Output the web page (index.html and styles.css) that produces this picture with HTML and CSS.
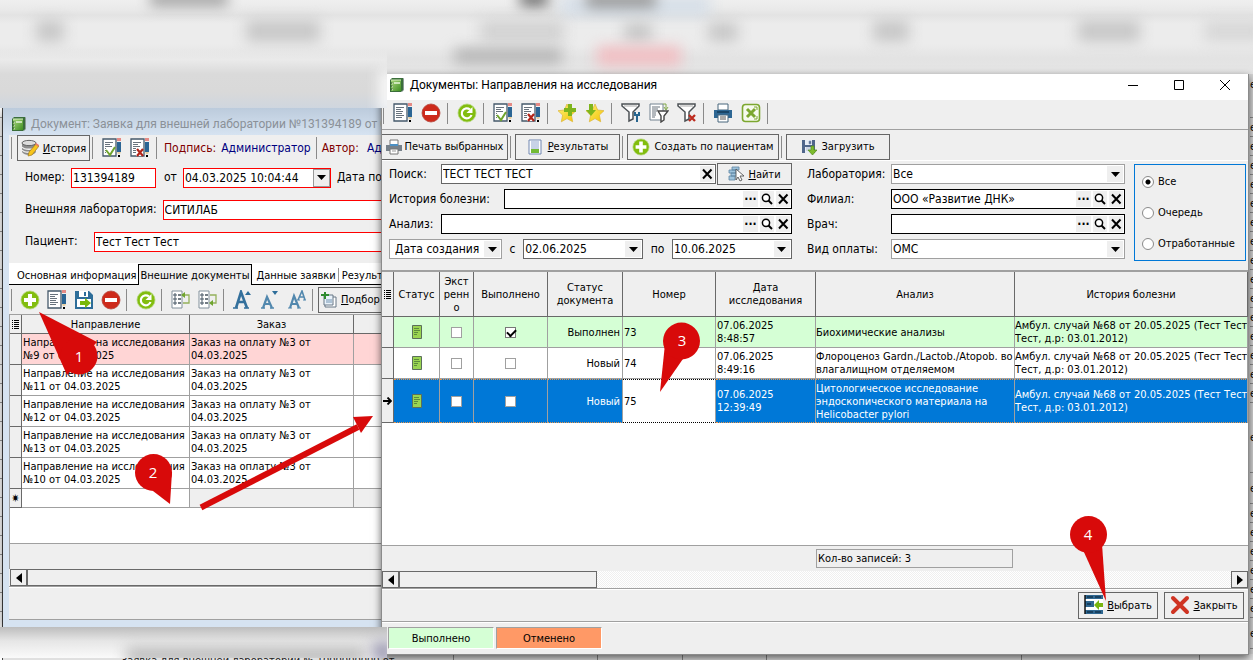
FILE: index.html
```html
<!DOCTYPE html>
<html lang="ru">
<head>
<meta charset="utf-8">
<title>Документы: Направления на исследования</title>
<link rel="stylesheet" href="styles.css">
</head>
<body>
<svg class="defs" aria-hidden="true">
  <defs>
    <linearGradient id="g-book" x1="0" y1="0" x2="1" y2="1"><stop offset="0" stop-color="#a9d67c"/><stop offset="1" stop-color="#3f8f22"/></linearGradient>
    <linearGradient id="g-star" x1="0" y1="0" x2="1" y2="1"><stop offset="0" stop-color="#fff27a"/><stop offset="1" stop-color="#f2c200"/></linearGradient>
    <symbol id="i-book" viewBox="0 0 16 16"><path d="M3 1h11q1 0 1 1v11l-2 2z" fill="#8b9a95"/><path d="M1 3l2-2h11v12l-2 2H1z" fill="#3a6e3a"/><rect x="2" y="3" width="10" height="11" fill="url(#g-book)"/><path d="M2 3h10" stroke="#d8f0c0"/><path d="M5 6h6M3 6.500h1M3 9.500h1M3 12.500h1" stroke="#e8f6da" stroke-width="1.500"/><path d="M1.500 6h2M1.500 9h2M1.500 12h2" stroke="#245024"/></symbol>
    <symbol id="i-doc" viewBox="0 0 20 20"><path d="M1 1h13v17H1z" fill="#fff" stroke="#45596b" stroke-width="1.300"/><path d="M3 4.500h8M3 6.500h5M3 8.500h7M3 10.500h6M3 12.500h8M3 14.500h6" stroke="#68727c"/><path d="M15 0h4v3h-4z" fill="#e58a85"/><path d="M15 4h4v10h-4z" fill="#2b6594"/><path d="M15 14h4l-1 2h-2z" fill="#e8cfa0"/><path d="M16 17h2v2h-2z" fill="#000"/></symbol>
    <symbol id="i-doccheck" viewBox="0 0 20 20"><use href="#i-doc"/><path d="M4 10h9v7H4z" fill="#fff"/><path d="M4 12l4 5 5-8" fill="none" stroke="#6fa32c" stroke-width="2"/></symbol>
    <symbol id="i-docx" viewBox="0 0 20 20"><use href="#i-doc"/><path d="M6 10h7v8H6z" fill="#fff"/><path d="M7 11l6 7M13 11l-6 7" stroke="#b22419" stroke-width="2.200"/></symbol>
    <symbol id="i-minus" viewBox="0 0 20 20"><circle cx="10" cy="10" r="9" fill="#cd2a1b" stroke="#b5483e" stroke-width=".8"/><path d="M4 8h12v4H4z" fill="#fff"/></symbol>
    <symbol id="i-plus" viewBox="0 0 20 20"><circle cx="10" cy="10" r="9" fill="#82bd0f" stroke="#b2d77a" stroke-width=".8"/><path d="M8 4h4v4h4v4h-4v4H8v-4H4V8h4z" fill="#fff"/></symbol>
    <symbol id="i-refresh" viewBox="0 0 20 20"><circle cx="10" cy="10" r="9" fill="#82bd0f" stroke="#b2d77a" stroke-width=".8"/><path d="M13 6.500A5 5 0 1 0 14.500 12" fill="none" stroke="#fff" stroke-width="2.200"/><path d="M15.500 4v6H9.500z" fill="#fff"/></symbol>
    <symbol id="i-save" viewBox="0 0 20 20"><path d="M1 1h14l4 4v14H1z" fill="#2d6d99"/><path d="M5 1h9v6H5z" fill="#fff"/><path d="M10 2h2v4h-2z" fill="#2d6d99"/><path d="M3 9h14v8H3z" fill="#fff"/><path d="M6 11h5V8l6 5-6 5v-3H6z" fill="#78b80a"/></symbol>
    <symbol id="i-tree" viewBox="0 0 20 20"><path d="M1 1h10v17H1z" fill="#fff" stroke="#81909b"/><path d="M3 4h2v2H3zM3 8h2v2H3zM3 12h2v2H3z" fill="none" stroke="#445563"/><path d="M7 5h3M7 9h3M7 13h3" stroke="#44515c" stroke-width="1.400"/></symbol>
    <symbol id="i-treeup" viewBox="0 0 20 20"><use href="#i-tree"/><path d="M12 13h6V5h-5" fill="none" stroke="#94b15b" stroke-width="1.300"/><path d="M14 2v6l-4-3z" fill="#6fa52f"/></symbol>
    <symbol id="i-treedown" viewBox="0 0 20 20"><use href="#i-tree"/><path d="M12 5h6v8h-4" fill="none" stroke="#94b15b" stroke-width="1.300"/><path d="M15 10v6l-4-3z" fill="#6fa52f"/></symbol>
    <symbol id="i-fontup" viewBox="0 0 20 20"><path d="M3 18L8 2l6 16M5 12h7" fill="none" stroke="#34709c" stroke-width="2.600"/><path d="M0 18h5M11 18h5" stroke="#34709c" stroke-width="1.500"/><path d="M12 5l3-4 3 4z" fill="#2d6d99"/></symbol>
    <symbol id="i-fontdown" viewBox="0 0 20 20"><path d="M3 18L7 7l5 11M4 14h7" fill="none" stroke="#5288ae" stroke-width="2.200"/><path d="M1 18h4M10 18h4" stroke="#5288ae" stroke-width="1.500"/><path d="M12 1h6l-3 4z" fill="#2d6d99"/></symbol>
    <symbol id="i-fontreset" viewBox="0 0 20 20"><path d="M3 18L7 6l5 12M4 14h7" fill="none" stroke="#5288ae" stroke-width="2.200"/><path d="M1 18h4M10 18h4M10 10h3M16 10h3" stroke="#5288ae"/><path d="M11 10l4-9 3 9M12 7h5" fill="none" stroke="#5288ae" stroke-width="1.600"/></symbol>
    <symbol id="i-pick" viewBox="0 0 16 16"><path d="M4 5h11v10H4z" fill="#fff" stroke="#667785"/><path d="M3 3h9v10H3z" fill="#e9f2fa" stroke="#667785"/><path d="M5 8h6M5 10h6" stroke="#7192b0"/><path d="M3 0h2v2h3v2H5v3H3V4H0V2h3z" fill="#2f8b2f"/></symbol>
    <symbol id="i-base" viewBox="0 0 18 18"><path d="M1 4v9c2 4 12 4 14 0V4z" fill="#8c8c8c"/><ellipse cx="8" cy="4" rx="7" ry="2.600" fill="#dcdcdc" stroke="#666"/><path d="M1 8c2 3 12 3 14 0M1 11c2 3 12 3 14 0" fill="none" stroke="#f1f1f1" stroke-width="1.300"/><path d="M7 17l1-4 7-8 3 2-7 9z" fill="#f7c51c" stroke="#9f781c" stroke-width=".7"/><path d="M14 5l1-1 3 2-1 2z" fill="#e77a67"/></symbol>
    <symbol id="i-star" viewBox="0 0 20 20"><path d="M10 1l2.700 6 6.300.7-4.600 4.400 1.300 6.700L10 15.600l-5.700 3.200 1.300-6.700L1 7.700 7.300 7z" fill="url(#g-star)" stroke="#dcb536" stroke-width=".7"/></symbol>
    <symbol id="i-starplus" viewBox="0 0 20 20"><use href="#i-star"/><path d="M11 1h4v4h4v4h-4v4h-4V9H7V5h4z" fill="#7eb51c"/></symbol>
    <symbol id="i-stardown" viewBox="0 0 20 20"><use href="#i-star"/><path d="M4 1h4v6h3l-5 6-5-6h3z" fill="#7eb51c"/></symbol>
    <symbol id="i-funnel" viewBox="0 0 20 20"><path d="M1 1h17v2l-6 6v7l-4 2V9L1 3z" fill="#fff" stroke="#4c5155" stroke-width="1.500"/><path d="M3 3h13" stroke="#aaa"/></symbol>
    <symbol id="i-funneltool" viewBox="0 0 20 20"><use href="#i-funnel"/><path d="M14 9v3h4V9M16 12v7" fill="none" stroke="#28668f" stroke-width="2"/></symbol>
    <symbol id="i-funneldoc" viewBox="0 0 20 20"><path d="M1 1h13v16H1z" fill="#fff" stroke="#738290"/><path d="M3 4h8M3 6h6M3 8h5M3 10h4M3 12h4M3 14h3" stroke="#68727c"/><path d="M14 1h3v5M15 4l2 3 2-3" fill="none" stroke="#81a84b"/><path d="M9 8h10l-4 5v4l-3 2v-6z" fill="#fff" stroke="#444" stroke-width="1.400"/></symbol>
    <symbol id="i-funnelx" viewBox="0 0 20 20"><use href="#i-funnel"/><path d="M12 12l6 6M18 12l-6 6" stroke="#bd2b1f" stroke-width="2.300"/></symbol>
    <symbol id="i-print" viewBox="0 0 20 20"><path d="M5 1h10v6H5z" fill="#fff" stroke="#49677d"/><path d="M1 7h18v8H1z" fill="#2d6693"/><path d="M4 9h12" stroke="#153b59" stroke-width="1.500"/><path d="M5 12h10v7H5z" fill="#fff" stroke="#49677d"/><path d="M7 14h6M7 16h6" stroke="#555"/></symbol>
    <symbol id="i-printgray" viewBox="0 0 16 16"><path d="M4 1h8v5H4z" fill="#fff" stroke="#777"/><path d="M0 6h16v6H0z" fill="#77818a"/><path d="M4 5h8v2H4z" fill="#4c90c4"/><path d="M4 10h8v5H4z" fill="#fff" stroke="#777"/><path d="M6 12h4" stroke="#999"/></symbol>
    <symbol id="i-excel" viewBox="0 0 20 20"><rect x="1.500" y="1.500" width="17" height="17" rx="3" fill="#f6faed" stroke="#7ca72f" stroke-width="1.600"/><path d="M6 6l8 8M14 6l-8 8" stroke="#7ca72f" stroke-width="3"/><path d="M13 4h3v3M13 16h3v-3" fill="none" stroke="#7ca72f"/></symbol>
    <symbol id="i-results" viewBox="0 0 16 16"><path d="M2 1h12v14H2z" fill="#fff" stroke="#7187b1"/><path d="M4 3h8M4 5h8M4 7h8M4 9h8" stroke="#91a6ce"/><path d="M4 10h8v4H4z" fill="#72ba35"/></symbol>
    <symbol id="i-find" viewBox="0 0 16 16"><path d="M4 1h7v3H4zM1 4h7v3H1zM3 7h7v3H3zM1 10h6v4H1z" fill="#9fc4dd" stroke="#5e87a3" stroke-width=".8"/><path d="M8 3v11l2-3 2 4 2-1-2-4h4z" fill="#fff" stroke="#555" stroke-width=".9"/></symbol>
    <symbol id="i-load" viewBox="0 0 16 16"><path d="M1 1h13v13H1z" fill="#50668b"/><path d="M4 1h7v5H4zM4 8h7v6H4z" fill="#e8edf6"/><path d="M8 2h2v3H8zM5 9h5M5 11h4" fill="#50668b" stroke="#8b9ab8" stroke-width=".6"/><path d="M10 7h3v4h3l-4.500 5L7 11h3z" fill="#7ebc2e" stroke="#4f8a1a" stroke-width=".7"/></symbol>
    <symbol id="i-choose" viewBox="0 0 20 20"><path d="M0 0h19v19H0z" fill="#fff"/><path d="M1 0h18v4H1zM1 6h9v6H1zM1 15h18v4H1z" fill="#2f6791"/><path d="M3 2h6M11 2h6M3 9h4M3 17h6M11 17h6" stroke="#12344d" stroke-width="1.300"/><path d="M1 0v19" stroke="#111" stroke-width="1.500"/><path d="M19 8v4h-4v3l-5-5 5-5v3z" fill="#78b510"/></symbol>
    <symbol id="i-cross" viewBox="0 0 20 20"><path d="M3 3l14 14M17 3L3 17" stroke="#cf3423" stroke-width="4" stroke-linecap="round"/></symbol>
    <symbol id="i-lens" viewBox="0 0 12 12"><circle cx="5" cy="4.800" r="3.600" fill="#fff" stroke="#000" stroke-width="1.500"/><path d="M7.500 7.500L11 11" stroke="#000" stroke-width="2"/></symbol>
    <symbol id="i-x" viewBox="0 0 12 12"><path d="M2 1.500l8.500 9M10.500 1.500L2 10.500" stroke="#000" stroke-width="2"/></symbol>
    <symbol id="i-down" viewBox="0 0 9 5"><path d="M0 0h9L4.500 5z"/></symbol>
    <symbol id="i-left" viewBox="0 0 6 10"><path d="M6 0v10L0 5z"/></symbol>
    <symbol id="i-right" viewBox="0 0 6 10"><path d="M0 0v10l6-5z"/></symbol>
    <symbol id="i-list" viewBox="0 0 7 11"><path d="M2 1.500h5M2 3.500h5M2 5.500h5M2 7.500h5M2 9.500h5M0 1.500h1M0 3.500h1M0 5.500h1M0 7.500h1M0 9.500h1" stroke="#000"/></symbol>
    <symbol id="i-green" viewBox="0 0 10 14"><path d="M.5.500h9v13h-9z" fill="#9ad551" stroke="#5b6f5b"/><path d="M2 3.500h5M2 5.500h6M2 7.500h4M2 9.500h3" stroke="#5c8c3c"/></symbol>
  </defs>
</svg>

<div class="desktop">
  <div class="backdrop">
    <div class="edge edge-left"></div>
    <ul class="edge edge-right">
      <li class="tall">е</li><li>е</li><li>е</li><li>е</li><li>е</li><li>е</li><li>е</li><li>е</li><li>е</li><li>е</li><li>е</li><li>е</li><li>е</li><li>е</li><li>е</li><li>е</li><li class="taller">е</li><li class="mid">е</li><li>е</li><li>е</li><li>е</li><li>е</li><li>е</li><li>е</li><li class="mid">е</li>
    </ul>
    <div class="edge edge-bottom"><p>Заявка для внешней лаборатории № 1000000000 от</p><span class="tick t1"></span><span class="tick t2"></span><span class="tick t3"></span><span class="tick t4"></span><span class="tick t5"></span><span class="tick t6"></span></div>
  </div>

  <section class="window request">
    <header class="titlebar"><svg class="i16"><use href="#i-book"/></svg><h2>Документ: Заявка для внешней лаборатории №131394189 от 04.03.2025</h2></header>
    <div class="client">
      <div class="toolbar bar-history">
        <span class="sep"></span>
        <button class="btn btn-history"><svg class="i18"><use href="#i-base"/></svg><span><u>И</u>стория</span></button>
        <span class="sep"></span>
        <button class="tool" aria-label="Подписать"><svg><use href="#i-doccheck"/></svg></button>
        <button class="tool" aria-label="Снять подпись"><svg><use href="#i-docx"/></svg></button>
        <span class="sep"></span>
        <p class="meta"><span>Подпись:</span> <b>Администратор</b></p>
        <span class="sep"></span>
        <p class="meta author"><span>Автор:</span> <b>Администратор</b></p>
      </div>
      <div class="request-form">
        <div class="row">
          <label for="num">Номер:</label><input class="field red num" id="num" value="131394189">
          <label for="dt">от</label><span class="field red date"><input id="dt" value="04.03.2025 10:04:44"><button class="drop boxed" aria-label="Открыть календарь"><svg class="tri"><use href="#i-down"/></svg></button></span>
          <span class="trail">Дата подписи:</span>
        </div>
        <div class="row"><label for="lab">Внешняя лаборатория:</label><input class="field red grow" id="lab" value="СИТИЛАБ"></div>
        <div class="row patient"><label for="pat">Пациент:</label><input class="field red grow" id="pat" value="Тест Тест Тест"></div>
      </div>
      <nav class="tabs">
        <button>Основная информация</button><button class="active">Внешние документы</button><button>Данные заявки</button><button class="ruled">Результаты</button>
      </nav>
      <div class="toolbar bar-docs">
        <span class="sep"></span>
        <button class="tool" aria-label="Добавить"><svg><use href="#i-plus"/></svg>
          <span class="pin pin1"><svg viewBox="0 0 60 64"><path d="M0 0L28 63 58 30z"/><circle cx="40" cy="44" r="18.500"/></svg><i>1</i></span></button>
        <button class="tool" aria-label="Изменить"><svg><use href="#i-doc"/></svg></button>
        <button class="tool" aria-label="Сохранить"><svg><use href="#i-save"/></svg></button>
        <button class="tool" aria-label="Удалить"><svg><use href="#i-minus"/></svg></button>
        <span class="sep"></span>
        <button class="tool" aria-label="Обновить"><svg><use href="#i-refresh"/></svg></button>
        <span class="sep"></span>
        <button class="tool" aria-label="Свернуть"><svg><use href="#i-treeup"/></svg></button>
        <button class="tool" aria-label="Развернуть"><svg><use href="#i-treedown"/></svg></button>
        <span class="sep"></span>
        <button class="tool" aria-label="Увеличить шрифт"><svg><use href="#i-fontup"/></svg></button>
        <button class="tool" aria-label="Уменьшить шрифт"><svg><use href="#i-fontdown"/></svg></button>
        <button class="tool" aria-label="Сбросить шрифт"><svg><use href="#i-fontreset"/></svg></button>
        <span class="sep"></span>
        <button class="btn btn-pick"><svg class="i16"><use href="#i-pick"/></svg><span><u>П</u>одбор</span></button>
      </div>
      <div class="grid-area">
        <table class="grid docs">
          <colgroup><col class="w12"><col class="w168"><col class="w164"><col></colgroup>
          <thead><tr><th><svg class="list"><use href="#i-list"/></svg></th><th>Направление</th><th>Заказ</th><th></th></tr></thead>
          <tbody>
            <tr class="pink"><td class="mark"></td><td>Направление на исследования №9 от 04.03.2025</td><td>Заказ на оплату №3 от 04.03.2025</td><td></td></tr>
            <tr><td class="mark"></td><td>Направление на исследования №11 от 04.03.2025</td><td>Заказ на оплату №3 от 04.03.2025</td><td></td></tr>
            <tr><td class="mark"></td><td>Направление на исследования №12 от 04.03.2025</td><td>Заказ на оплату №3 от 04.03.2025</td><td></td></tr>
            <tr><td class="mark"></td><td>Направление на исследования №13 от 04.03.2025</td><td>Заказ на оплату №3 от 04.03.2025</td><td></td></tr>
            <tr><td class="mark"></td><td>Направление на исследования №10 от 04.03.2025</td><td>Заказ на оплату №3 от 04.03.2025</td><td></td></tr>
            <tr class="blank"><td class="mark">✷</td><td><span class="pin pin2"><svg viewBox="0 0 38 52"><circle cx="18.500" cy="18.500" r="18.500"/><path d="M37 18l-2 32L18 37z"/></svg><i>2</i></span></td><td class="off"></td><td class="off"></td></tr>
          </tbody>
        </table>
      </div>
      <div class="grid-foot"></div>
      <div class="scroll"><button aria-label="Влево"><svg class="arr"><use href="#i-left"/></svg></button><span class="thumb full"></span></div>
      <div class="status"></div>
    </div>
  </section>

  <div class="blur-band" aria-hidden="true">
    <span class="smear s1"></span><span class="smear s2"></span><span class="smear s3"></span><span class="smear s5"></span><span class="smear s4"></span><span class="smear s6"></span><span class="smear s7"></span><span class="smear s8"></span><span class="smear s9"></span><span class="smear s10"></span><span class="smear s11"></span><span class="smear s12"></span><span class="smear s13"></span><span class="smear s14"></span>
  </div>
  <div class="blur-corner top" aria-hidden="true"><span class="smear c1"></span></div>
  <div class="blur-corner bottom" aria-hidden="true"><span class="smear c2"></span><span class="smear c3"></span></div>

  <svg class="arrow" viewBox="0 0 176 96" aria-hidden="true"><path d="M2 91.500L159 11" stroke="#d80a0a" stroke-width="6"/><path d="M154 1l20-1-12 17z" fill="#d80a0a"/></svg>

  <section class="window list-window">
    <header class="titlebar"><svg class="i16"><use href="#i-book"/></svg><h1>Документы: Направления на исследования</h1>
      <div class="sys-buttons">
        <button class="sys" aria-label="Свернуть окно"><svg viewBox="0 0 12 12"><path d="M1 6.500h10"/></svg></button>
        <button class="sys" aria-label="Развернуть окно"><svg viewBox="0 0 12 12"><path d="M1.500 1.500h9v9h-9z"/></svg></button>
        <button class="sys" aria-label="Закрыть окно"><svg viewBox="0 0 12 12"><path d="M1 1l10 10M11 1L1 11"/></svg></button>
      </div>
    </header>
    <div class="client">
      <div class="toolbar bar-main">
        <span class="sep"></span>
        <button class="tool" aria-label="Изменить"><svg><use href="#i-doc"/></svg></button>
        <button class="tool" aria-label="Удалить"><svg><use href="#i-minus"/></svg></button>
        <span class="sep"></span>
        <button class="tool" aria-label="Обновить"><svg><use href="#i-refresh"/></svg></button>
        <span class="sep"></span>
        <button class="tool" aria-label="Подписать"><svg><use href="#i-doccheck"/></svg></button>
        <button class="tool" aria-label="Снять подпись"><svg><use href="#i-docx"/></svg></button>
        <span class="sep"></span>
        <button class="tool" aria-label="В избранное"><svg><use href="#i-starplus"/></svg></button>
        <button class="tool" aria-label="Из избранного"><svg><use href="#i-stardown"/></svg></button>
        <span class="sep"></span>
        <button class="tool" aria-label="Настроить фильтр"><svg><use href="#i-funneltool"/></svg></button>
        <button class="tool" aria-label="Применить фильтр"><svg><use href="#i-funneldoc"/></svg></button>
        <button class="tool" aria-label="Снять фильтр"><svg><use href="#i-funnelx"/></svg></button>
        <span class="sep"></span>
        <button class="tool" aria-label="Печать"><svg><use href="#i-print"/></svg></button>
        <button class="tool" aria-label="В Excel"><svg><use href="#i-excel"/></svg></button>
        <span class="sep"></span>
      </div>
      <div class="toolbar bar-actions">
        <button class="btn b-print"><svg class="i16"><use href="#i-printgray"/></svg><span>Печать выбранных</span></button>
        <span class="sep"></span>
        <button class="btn b-results"><svg class="i16"><use href="#i-results"/></svg><span><u>Р</u>езультаты</span></button>
        <span class="sep"></span>
        <button class="btn b-create"><svg class="i18"><use href="#i-plus"/></svg><span>Создать по пациентам</span></button>
        <span class="sep"></span>
        <button class="btn b-load"><svg class="i16"><use href="#i-load"/></svg><span>Загрузить</span></button>
      </div>
      <div class="filters">
        <div class="stack">
          <div class="row"><label class="l52" for="q">Поиск:</label><span class="field grow mid-border"><input id="q" value="ТЕСТ ТЕСТ ТЕСТ"><button class="mini" aria-label="Очистить"><svg><use href="#i-x"/></svg></button></span><button class="btn b-find"><svg class="i16"><use href="#i-find"/></svg><span><u>Н</u>айти</span></button></div>
          <div class="row"><label class="l115" for="ib">История болезни:</label><span class="field grow"><input id="ib"><button class="mini dots" aria-label="Выбрать">···</button><button class="mini" aria-label="Найти"><svg><use href="#i-lens"/></svg></button><button class="mini" aria-label="Очистить"><svg><use href="#i-x"/></svg></button></span></div>
          <div class="row"><label class="l52" for="an">Анализ:</label><span class="field grow"><input id="an"><button class="mini dots" aria-label="Выбрать">···</button><button class="mini" aria-label="Найти"><svg><use href="#i-lens"/></svg></button><button class="mini" aria-label="Очистить"><svg><use href="#i-x"/></svg></button></span></div>
          <div class="row dates"><span class="field soft kind"><select aria-label="Вид даты"><option>Дата создания</option></select><span class="drop"><svg class="tri"><use href="#i-down"/></svg></span></span><label for="d1">с</label><span class="field mid-border day"><input id="d1" value="02.06.2025"><button class="drop" aria-label="Календарь"><svg class="tri"><use href="#i-down"/></svg></button></span><label for="d2">по</label><span class="field mid-border day"><input id="d2" value="10.06.2025"><button class="drop" aria-label="Календарь"><svg class="tri"><use href="#i-down"/></svg></button></span></div>
        </div>
        <div class="stack">
          <div class="row"><label class="l84" for="f1">Лаборатория:</label><span class="field soft grow"><select id="f1"><option>Все</option></select><span class="drop"><svg class="tri"><use href="#i-down"/></svg></span></span></div>
          <div class="row"><label class="l84" for="f2">Филиал:</label><span class="field grow"><input id="f2" value="ООО «Развитие ДНК»"><button class="mini dots" aria-label="Выбрать">···</button><button class="mini" aria-label="Найти"><svg><use href="#i-lens"/></svg></button><button class="mini" aria-label="Очистить"><svg><use href="#i-x"/></svg></button></span></div>
          <div class="row"><label class="l84" for="f3">Врач:</label><span class="field grow"><input id="f3"><button class="mini dots" aria-label="Выбрать">···</button><button class="mini" aria-label="Найти"><svg><use href="#i-lens"/></svg></button><button class="mini" aria-label="Очистить"><svg><use href="#i-x"/></svg></button></span></div>
          <div class="row"><label class="l84" for="f4">Вид оплаты:</label><span class="field soft grow"><select id="f4"><option>ОМС</option></select><span class="drop"><svg class="tri"><use href="#i-down"/></svg></span></span></div>
        </div>
        <div class="radios">
          <label><input type="radio" name="state" checked>Все</label>
          <label><input type="radio" name="state">Очередь</label>
          <label><input type="radio" name="state">Отработанные</label>
        </div>
      </div>
      <div class="grid-area">
        <table class="grid results">
          <colgroup><col class="w12"><col class="w46"><col class="w34"><col class="w74"><col class="w75"><col class="w93"><col class="w100"><col class="w199"><col></colgroup>
          <thead><tr><th><svg class="list"><use href="#i-list"/></svg></th><th>Статус</th><th>Экст<br>ренн<br>о</th><th>Выполнено</th><th>Статус<br>документа</th><th>Номер</th><th>Дата<br>исследования</th><th>Анализ</th><th>История болезни</th></tr></thead>
          <tbody>
            <tr class="green"><td class="mark"></td><td class="c"><svg class="state"><use href="#i-green"/></svg></td><td class="c"><input type="checkbox" aria-label="Экстренно"></td><td class="c"><input type="checkbox" aria-label="Выполнено" checked></td><td class="r">Выполнен</td><td>73</td><td>07.06.2025<br>8:48:57</td><td class="case">Биохимические анализы</td><td class="case">Амбул. случай №68 от 20.05.2025 (Тест Тест<br>Тест, д.р: 03.01.2012)</td></tr>
            <tr><td class="mark"></td><td class="c"><svg class="state"><use href="#i-green"/></svg></td><td class="c"><input type="checkbox" aria-label="Экстренно"></td><td class="c"><input type="checkbox" aria-label="Выполнено"></td><td class="r">Новый</td><td>74</td><td>07.06.2025<br>8:49:16</td><td class="case">Флороценоз Gardn./Lactob./Atopob. во<br>влагалищном отделяемом</td><td class="case">Амбул. случай №68 от 20.05.2025 (Тест Тест<br>Тест, д.р: 03.01.2012)</td></tr>
            <tr class="selected"><td class="mark"><svg class="cur" viewBox="0 0 9 8"><path d="M0 4h7M4.500 .5L8 4 4.500 7.500" fill="none" stroke="#000" stroke-width="1.800"/></svg></td><td class="c"><svg class="state"><use href="#i-green"/></svg></td><td class="c"><input type="checkbox" aria-label="Экстренно"></td><td class="c"><input type="checkbox" aria-label="Выполнено"></td><td class="r">Новый</td><td class="focus">75<span class="pin pin3"><svg viewBox="0 0 41 70"><path d="M0 70L5 22l20 12z"/><circle cx="21.500" cy="19" r="18.500"/></svg><i>3</i></span></td><td>07.06.2025<br>12:39:49</td><td class="case">Цитологическое исследование<br>эндоскопического материала на<br>Helicobacter pylori</td><td class="case">Амбул. случай №68 от 20.05.2025 (Тест Тест<br>Тест, д.р: 03.01.2012)</td></tr>
          </tbody>
        </table>
      </div>
      <div class="grid-foot"><output>Кол-во записей: 3</output></div>
      <div class="scroll"><button aria-label="Влево"><svg class="arr"><use href="#i-left"/></svg></button><span class="thumb"></span><span class="track"></span><button aria-label="Вправо"><svg class="arr"><use href="#i-right"/></svg></button></div>
      <div class="actions">
        <button class="btn"><svg class="i20"><use href="#i-choose"/></svg><span><u>В</u>ыбрать</span>
          <span class="pin pin4"><svg viewBox="0 0 37 86"><path d="M36 85L13 34l19-6z"/><circle cx="18.500" cy="18.500" r="18.500"/></svg><i>4</i></span></button>
        <button class="btn"><svg class="i20"><use href="#i-cross"/></svg><span><u>З</u>акрыть</span></button>
      </div>
      <div class="legend"><span class="ok">Выполнено</span><span class="off">Отменено</span></div>
    </div>
  </section>
</div>
</body>
</html>
```
FILE: styles.css
```css
* { box-sizing: border-box; }

body {
  margin: 0;
  font: 11px/13px "DejaVu Sans Condensed", "DejaVu Sans", sans-serif;
  color: #000;
}

button, input, select { font: inherit; color: inherit; margin: 0; }
button { padding: 0; border: 0; background: none; }
p, h1, h2, ul { margin: 0; padding: 0; }
.defs { position: absolute; width: 0; height: 0; }

.desktop {
  position: relative;
  min-height: 100vh;
  overflow: hidden;
  background: #efefef;
}

/* application behind the windows */
.edge { position: absolute; overflow: hidden; }
.edge-left {
  left: 0; top: 108px; bottom: 0; width: 3px;
  border-right: 1px solid #444;
  background: repeating-linear-gradient(#fff 0 9px, #999 9px 10px, #fff 10px 19px);
}
.edge-right {
  right: 0; top: 74px; bottom: 0; width: 4px;
  padding-left: 1px;
  background: #d3d3d3;
  list-style: none;
}
.edge-right li {
  display: flex;
  align-items: center;
  height: 19px;
  border-bottom: 1px solid #8a8a8a;
}
.edge-right .tall { height: 44px; padding-bottom: 22px; }
.edge-right .taller { height: 70px; }
.edge-right .mid { height: 31px; }
.edge-bottom {
  left: 3px; right: 0; bottom: 0; height: 6px;
  background: #e0e0e0;
}
.edge-bottom p { padding-left: 118px; color: #222; white-space: nowrap; }
.tick { position: absolute; top: 0; bottom: 0; width: 1px; background: #888; }
.t1 { left: 36%; } .t2 { left: 47.500%; } .t3 { left: 54.300%; }
.t4 { left: 61%; } .t5 { left: 81.400%; } .t6 { left: 95.700%; }

.blur-band {
  position: absolute;
  left: 0; right: 0; top: 0;
  height: 74px;
  overflow: hidden;
  background: linear-gradient(#efefef 0, #e9e9e9 10px, #e3e3e3 15px, #ececec 24px, #ececec 44px, #e3e3e3 58px, #e6e6e6 74px);
}
.blur-corner { position: absolute; z-index: 2; left: 0; width: 387px; overflow: hidden; }
.blur-corner.top {
  top: 48px; height: 60px;
  background: linear-gradient(#ececec00, #eaeaea 12px, #dadada 26px, #d9d9d9 44px, #cfd6df 60px);
}
.blur-corner.bottom {
  bottom: 2px; height: 31px;
  background: linear-gradient(#bdbdbd, #e6e6e6 14px, #fafafa);
}
.smear { position: absolute; filter: blur(7px); background: #c8c8c8; }
.s1 { left: 150px; top: -8px; width: 78px; height: 14px; background: #a0a0a0; }
.s2 { left: 36px; top: 20px; width: 28px; height: 22px; }
.s3 { left: 246px; top: 20px; width: 74px; height: 22px; }
.s4 { left: 520px; top: -8px; width: 28px; height: 14px; background: #666; }
.s5 { left: 560px; top: -4px; width: 150px; height: 20px; background: #d6dfe8; }
.s6 { left: 586px; top: -8px; width: 70px; height: 16px; background: #999; }
.s7 { left: 480px; top: 20px; width: 84px; height: 22px; background: #d2d2d2; }
.s8 { left: 624px; top: 22px; width: 28px; height: 20px; }
.s9 { left: 708px; top: 22px; width: 30px; height: 20px; }
.s10 { left: 873px; top: 20px; width: 36px; height: 22px; }
.s11 { left: 1078px; top: 20px; width: 62px; height: 22px; }
.s12 { left: 1204px; top: 20px; width: 60px; height: 22px; background: #d8d8d8; }
.s13 { left: 454px; top: 48px; width: 108px; height: 16px; background: #b6b6b6; }
.s14 { left: 597px; top: 46px; width: 84px; height: 20px; background: #f1bfc3; }
.c1 { right: -8px; top: 22px; width: 16px; height: 44px; background: #fafafa; }
.c2 { left: 126px; bottom: -4px; width: 240px; height: 14px; background: #b5b5b5; }
.c3 { right: -6px; bottom: -4px; width: 20px; height: 20px; background: #9a98b0; }

/* windows */
.window { position: absolute; display: flex; flex-direction: column; }
.titlebar { display: flex; align-items: center; flex: none; white-space: nowrap; overflow: hidden; }
.titlebar h1, .titlebar h2 { flex: 1; font: 12px/16px Roboto, "Open Sans", sans-serif; }
.client { display: flex; flex-direction: column; flex: 1; min-height: 0; background: #efefef; }
.i16 { width: 16px; height: 16px; flex: none; }
.i18 { width: 18px; height: 18px; flex: none; }
.i20 { width: 20px; height: 20px; flex: none; }

.request {
  left: 3px; top: 108px; bottom: 33px; width: 400px;
  padding: 0 0 7px 6px;
  background: linear-gradient(#bccbdc, #d6e3f1 27px);
  box-shadow: 0 4px 10px #0008;
}
.request .titlebar { height: 27px; padding: 4px 0 0 2px; gap: 4px; color: #8b9198; }
.request .client { border-bottom: 1px solid #a0a0a0; overflow: hidden; }

.list-window {
  left: 381px; right: 4px; top: 74px; bottom: 5px;
  border: 1px solid #8b8b8b;
  border-top: 0;
  box-shadow: 0 3px 8px #0009;
}
.list-window .titlebar { height: 26px; padding: 0 0 4px 7px; gap: 5px; background: #fff; }
.sys-buttons { display: flex; }
.sys { width: 46px; height: 22px; display: flex; align-items: center; justify-content: center; }
.sys svg { width: 12px; height: 12px; fill: none; stroke: #000; stroke-width: 1; }

/* toolbars */
.toolbar { display: flex; align-items: center; flex: none; }
.sep { flex: none; width: 1px; height: 22px; margin: 0 5px 0 2px; background: #8a8a8a; }
.tool { position: relative; flex: none; width: 28px; height: 24px; display: flex; align-items: center; justify-content: center; }
.tool > svg { width: 20px; height: 20px; }
.btn {
  position: relative;
  display: flex; align-items: center; justify-content: center;
  flex: none;
  gap: 4px;
  height: 26px;
  border: 1px solid #666;
  background: #efefef;
  white-space: nowrap;
}
.bar-history { height: 26px; }
.btn-history { width: 73px; }
.meta { font-size: 12px; color: #800000; display: flex; gap: 5px; padding: 0 3px 0 2px; white-space: nowrap; }
.meta b { font-weight: normal; color: #000080; }
.author { gap: 8px; padding-left: 0; }
.bar-docs { height: 29px; }
.bar-docs .tool { width: 27px; }
.bar-docs .sep:first-child { margin-right: 4px; }
.btn-pick { width: 90px; justify-content: flex-start; padding-left: 2px; }
.bar-main { height: 30px; padding-bottom: 3px; border-bottom: 1px solid #a0a0a0; }
.bar-main .sep { height: 21px; }
.bar-main .sep:first-child { margin-left: 1px; }
.bar-actions { height: 31px; padding-top: 3px; border-bottom: 1px solid #fff; }
.bar-actions .sep { margin-right: 4px; }
.b-print { width: 126px; border-left: 0; gap: 3px; }
.b-results { width: 105px; gap: 5px; }
.b-create { width: 152px; gap: 4px; }
.b-load { width: 104px; }
.b-find { width: 75px; height: 22px; margin-left: 1px; }

/* fields */
.row { display: flex; align-items: center; height: 20px; font-size: 12px; white-space: nowrap; }
.row label { flex: none; }
.row .btn { font-size: 11px; }
.field {
  display: flex; align-items: center;
  height: 20px; min-width: 0;
  border: 1px solid #000;
  background: #fff;
  padding: 0 1px;
  border-radius: 0;
  font-size: 12px;
}
.field input, .field select {
  flex: 1; min-width: 0; width: 0; height: 16px;
  padding: 0;
  border: 0; outline: 0; background: none;
  appearance: none;
}
.grow { flex: 1; }
.red { border-color: #f00; }
.soft { border-color: #a0a0a0; }
.mid-border { border-color: #666; }
.drop, .mini { flex: none; width: 16px; height: 16px; display: flex; align-items: center; justify-content: center; background: #efefef; }
.mini { width: 14px; margin-left: 2px; }
.dots { width: 15px; font: bold 12px/16px "DejaVu Sans Condensed", sans-serif; }
.mini svg { width: 12px; height: 12px; }
.boxed { width: 17px; height: 18px; border: 1px solid #999; }
.field.date { padding-right: 0; }
.tri { width: 9px; height: 5px; }

.request-form { display: flex; flex-direction: column; gap: 11px; padding: 6px 0 11px 16px; }
.request-form .row { height: 21px; gap: 6px; }
.num { flex: none; width: 85px; margin-right: 2px; }
.date { flex: none; width: 148px; }
.request-form .patient { gap: 16px; }

.filters { display: grid; grid-template-columns: 403px minmax(200px, 318px) 106px; column-gap: 15px; justify-content: start; padding: 3px 2px 9px 7px; }
.stack { display: flex; flex-direction: column; gap: 5px; }
.l52 { width: 52px; } .l115 { width: 115px; } .l84 { width: 84px; }
.kind { width: 113px; padding-left: 5px; }
.dates { justify-content: space-between; }
.day { width: 120px; }
.radios {
  display: flex; flex-direction: column; justify-content: space-around;
  height: 97px; margin-left: -6px; padding: 1px 0 1px 7px;
  border: 1px solid #0078d7;
}
.radios label { display: flex; align-items: center; gap: 4px; white-space: nowrap; }
.radios input {
  appearance: none; width: 12px; height: 12px;
  border: 1px solid #8a8a8a; border-radius: 50%; background: #fff;
}
.radios input:checked { background: radial-gradient(#000 2px, #fff 3px); }

/* tabs */
.tabs { display: flex; align-items: flex-end; flex: none; height: 22px; background: #fff; border-bottom: 1px solid #000; white-space: nowrap; }
.tabs button { flex: none; height: 18px; padding: 0 2px 0 4px; }
.tabs button:first-child { padding: 0 1px 0 8px; }
.tabs .active { height: 21px; margin-bottom: -1px; padding: 0 2px 0 2px; border: 1px solid #000; border-bottom: 0; background: #efefef; }
.tabs .ruled { height: 14px; margin-bottom: 2px; padding: 0 4px 0 3px; border-left: 1px solid #999; }

/* grids */
.grid-area { flex: 1; min-height: 0; background: #fff; border-top: 1px solid #a0a0a0; border-left: 1px solid #a0a0a0; }
.list-window .grid-area { border-top-width: 2px; border-left: 0; }
.grid { width: 100%; table-layout: fixed; border-collapse: separate; border-spacing: 0; }
.w12 { width: 12px; } .w34 { width: 34px; } .w46 { width: 46px; } .w74 { width: 74px; } .w75 { width: 75px; }
.w93 { width: 93px; } .w100 { width: 100px; } .w164 { width: 164px; } .w168 { width: 168px; } .w199 { width: 199px; }
.grid th, .grid td { height: 31px; padding: 0 0 0 1px; border-right: 1px solid #a0a0a0; border-bottom: 1px solid #a0a0a0; text-align: left; overflow: hidden; }
.grid th { height: 19px; padding: 0; font-weight: normal; text-align: center; background: #efefef; border-color: #696969; }
.grid.results th { height: 45px; }
.grid .mark { padding: 0; background: #efefef; border-color: #696969; text-align: center; }
.grid .c { text-align: center; padding: 0; }
.grid .r { text-align: right; padding-right: 2px; }
.grid .case { white-space: nowrap; padding-left: 0; }
.list { width: 7px; height: 11px; display: block; margin: 0 auto; }
.cur { width: 9px; height: 8px; display: block; margin: 0 auto; }
.state { width: 10px; height: 14px; vertical-align: middle; }
.pink td { background: #ffd5d5; }
.green td { background: #d5ffd5; }
.grid .blank td { height: 19px; overflow: visible; position: relative; }
.grid .blank .off { background: #efefef; }
.grid .selected td { height: 44px; background: #0078d7; color: #fff; border-top: 1px dotted #e8954b; border-bottom: 1px dotted #e8954b; }
.grid .selected .mark { border-top: 0; border-bottom: 1px solid #696969; background: #efefef; }
.grid .selected .focus { position: relative; overflow: visible; background: #fff; color: #000; border-top-color: #000; border-bottom-color: #000; }
.grid input { appearance: none; display: block; width: 11px; height: 11px; margin: 0 auto; border: 1px solid #a0a0a0; background: #fff; }
.grid input:checked { border-color: #777; }
.grid input:checked::after { content: ""; display: block; width: 7px; height: 4px; margin: 1px; border: solid #000; border-width: 0 0 2px 2px; transform: rotate(-45deg); }

.grid-foot { flex: none; height: 26px; border-top: 1px solid #a0a0a0; }
.request .grid-foot { border-left: 1px solid #a0a0a0; }
.list-window .grid-foot { padding: 3px 0 0 434px; }
.grid-foot output { display: flex; align-items: center; width: 197px; height: 19px; padding-left: 1px; border: 1px solid #a0a0a0; }
.scroll { display: flex; flex: none; height: 17px; }
.request .scroll { padding-left: 1px; }
.scroll button { flex: none; width: 17px; border: 1px solid #696969; display: flex; align-items: center; justify-content: center; background: #efefef; }
.arr { width: 6px; height: 10px; }
.thumb { flex: none; width: 198px; border: 1px solid #696969; background: #efefef; }
.thumb.full { flex: 1; }
.track { flex: 1; background: repeating-conic-gradient(#fff 0 25%, #efefef 0 50%) 0 0 / 2px 2px; }
.status { flex: none; height: 33px; border-top: 1px solid #a0a0a0; box-shadow: inset 0 1px #fff; }

.actions { display: flex; justify-content: flex-end; align-items: center; gap: 6px; flex: none; height: 34px; padding-right: 4px; border-top: 1px solid #a0a0a0; border-bottom: 1px solid #a0a0a0; box-shadow: inset 0 1px #fff; }
.actions .btn { width: 80px; height: 27px; gap: 3px; }
.legend { display: flex; gap: 2px; flex: none; height: 32px; padding: 4px 6px; border-top: 1px solid #fff; }
.legend span { display: flex; align-items: center; justify-content: center; width: 106px; height: 22px; border: 1px solid #fff; border-top-color: #a0a0a0; border-left-color: #a0a0a0; }
.legend .ok { background: #d5ffd5; }
.legend .off { background: #ff9966; }

/* numbered callouts */
.pin { position: absolute; z-index: 5; color: #fff; pointer-events: none; }
.pin svg { display: block; width: 100%; height: 100%; fill: #d80a0a; }
.pin i { position: absolute; width: 20px; text-align: center; font: 15px/20px "Open Sans", "Noto Sans", sans-serif; }
.pin1 { left: 23px; top: 24px; width: 60px; height: 64px; }
.pin1 i { left: 30px; top: 34px; }
.pin2 { left: 113px; top: -35px; width: 38px; height: 52px; }
.pin2 i { left: 8px; top: 8px; }
.pin3 { left: 37px; top: -58px; width: 41px; height: 70px; }
.pin3 i { left: 12px; top: 8px; }
.pin4 { left: -9px; top: -77px; width: 37px; height: 86px; }
.pin4 i { left: 8px; top: 8px; }
.arrow { position: absolute; left: 199px; top: 416px; width: 176px; height: 96px; }
```
